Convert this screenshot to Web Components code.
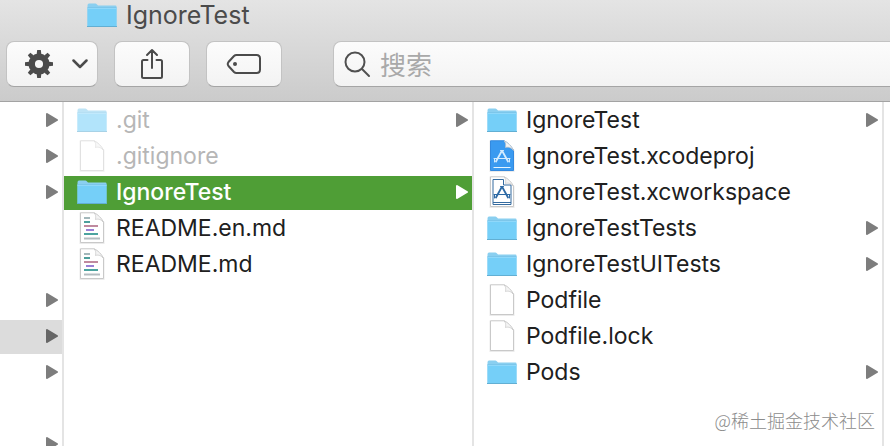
<!DOCTYPE html>
<html lang="zh-CN">
<head>
<meta charset="utf-8">
<title>IgnoreTest</title>
<style>
html, body { height: 100%; margin: 0; }
body { background: #fff; overflow: hidden; font: 400 23px/36px Inter, "Noto Sans CJK SC", sans-serif; font-optical-sizing: none; color: #202020; }
</style>
</head>
<body>
<finder-window>
  <finder-toolbar slot="toolbar">IgnoreTest</finder-toolbar>
  <finder-column aria-label="上级">
    <file-row arrow></file-row>
    <file-row arrow></file-row>
    <file-row arrow></file-row>
    <file-row></file-row>
    <file-row></file-row>
    <file-row arrow></file-row>
    <file-row arrow path></file-row>
    <file-row arrow></file-row>
    <file-row></file-row>
    <file-row arrow></file-row>
  </finder-column>
  <finder-column>
    <file-row kind="folder" arrow dim>.git</file-row>
    <file-row kind="blank" dim>.gitignore</file-row>
    <file-row kind="folder" arrow selected>IgnoreTest</file-row>
    <file-row kind="text">README.en.md</file-row>
    <file-row kind="text">README.md</file-row>
  </finder-column>
  <finder-column>
    <file-row kind="folder" arrow>IgnoreTest</file-row>
    <file-row kind="project">IgnoreTest.xcodeproj</file-row>
    <file-row kind="workspace">IgnoreTest.xcworkspace</file-row>
    <file-row kind="folder" arrow>IgnoreTestTests</file-row>
    <file-row kind="folder" arrow>IgnoreTestUITests</file-row>
    <file-row kind="blank">Podfile</file-row>
    <file-row kind="blank">Podfile.lock</file-row>
    <file-row kind="folder" arrow>Pods</file-row>
  </finder-column>
  <finder-column></finder-column>
  <span slot="mark">@稀土掘金技术社区</span>
</finder-window>
<script>
const sheet = (fill, stroke, inner) => `
  <svg viewBox="0 0 30 32" width="30" height="32" aria-hidden="true">
    <path d="M3.500 1.500H17L26.500 10.500V31H3.500Z" fill="none" stroke="#000" stroke-opacity=".08" stroke-width="2"/>
    <path d="M3.500 .800H17C20 2 25 7 26.500 10.500V30.500H3.500Z" fill="${fill}" stroke="${stroke}"/>
    ${inner}
    <path d="M17 1C19.500 3 18.500 6 18.500 7.500C20.500 6.500 25 7.500 26.500 10.500C25 6.500 20.500 2 17 1Z" fill="#f4f4f4" stroke="#c4c4c4" stroke-width=".7"/>
  </svg>`;
const compass = c => `
  <g fill="none" stroke="${c}" stroke-linecap="round">
    <path d="M14.500 11.500L9 21.500M15.500 11.500L21 21.500" stroke-width="1.800"/>
    <path d="M13.500 10.500H16.500M7 18.500H23M7.500 19V22M22.500 19V22" stroke-width="1"/>
  </g>`;
const icons = {
  folder: `
  <svg viewBox="0 0 30 26" width="30" height="26" aria-hidden="true">
    <path d="M.5 3.500Q.5 1.500 2 1.500H8.500Q9.500 1.500 10.500 3L11 3.500H28.500Q29.500 3.500 29.500 4.500V24.500H.5Z" fill="#8acff0"/>
    <path d="M.5 6H29.500V24.500H.5Z" fill="#75cff8"/>
    <path d="M.5 5.500H29.500" stroke="#7cc6ea"/>
    <path d="M.5 6.500H29.500" stroke="#8fd8fa"/>
    <path d="M0 24.500H30" stroke="#62afd3"/>
  </svg>`,
  blank: sheet('#fff', '#c9c9c9', ''),
  text: sheet('#fff', '#c9c9c9', `
    <g fill="none" stroke-width="2">
      <path d="M7 6H13" stroke="#a3b8bb"/><path d="M7 10H13" stroke="#4e9f9c"/>
      <path d="M7 14H21" stroke="#c08a9f"/><path d="M9 18H17" stroke="#9a80d6"/>
      <path d="M7 22H21" stroke="#4ca4a0"/><path d="M7 26.500H23" stroke="#b3bcc0"/>
    </g>`),
  project: sheet('#3a9af0', '#3389df', compass('#d4ecff') + '<path d="M6.500 27.500H23.500" stroke="#e6f5ff"/>'),
  workspace: sheet('#fff', '#c9c9c9', '<path d="M6 3.500H16.500V9H24V28.500H6Z" fill="#fff" stroke="#356b9f"/>' + compass('#2e6aa5') + '<path d="M6 26.500H24" stroke="#356b9f"/>')
};

class FinderWindow extends HTMLElement {
  constructor() {
    super();
    this.attachShadow({ mode: 'open' }).innerHTML = `
    <style>
      :host { display: flex; flex-direction: column; height: 100%; position: relative; overflow: hidden; }
      main { flex: 1; min-height: 0; display: grid; grid-template-columns: 64px 1fr 1fr 6px; }
      .mark { position: absolute; right: 15px; bottom: 15px; font: 18px/22px "Noto Sans CJK SC", sans-serif; font-weight: 300; color: #8c8c8c; text-shadow: 0 0 2px #fff; }
    </style>
    <slot name="toolbar"></slot>
    <main><slot></slot></main>
    <div class="mark"><slot name="mark"></slot></div>`;
  }
}

class FinderToolbar extends HTMLElement {
  constructor() {
    super();
    const teeth = [0, 45, 90, 135, 180, 225, 270, 315]
      .map(a => `<path d="M12.700 5L13.200 1H16.800L17.300 5Z" transform="rotate(${a} 15 15)"/>`).join('');
    this.attachShadow({ mode: 'open' }).innerHTML = `
    <style>
      :host { display: block; flex: none; background: linear-gradient(#e4e4e4, #cbcbcb); border-bottom: 1px solid #a3a3a3; }
      h1 { display: flex; align-items: center; gap: 9px; margin: 0; padding: 0 87px; height: 30px; font-size: 25px; line-height: 30px; font-weight: 400; color: #4b4b4b; }
      .bar { display: flex; padding: 11px 0 14px 6px; gap: 16px; overflow: hidden; }
      button, label { box-sizing: border-box; height: 46px; border: 1px solid #c3c3c3; border-bottom-color: #a5a5a5; border-radius: 8px; background: linear-gradient(#fcfcfc, #f3f3f3); color: #4b4b4b; }
      button { display: flex; align-items: center; justify-content: center; flex: none; width: 76px; padding: 0; }
      button.menu { width: 92px; gap: 18px; padding-left: 8px; }
      label { display: flex; align-items: center; flex: 1; min-width: 0; gap: 8px; padding: 0 10px; margin: 0 -12px 0 35px; }
      input { flex: 1; min-width: 0; border: 0; padding: 0; background: none; outline: 0; font: 26px/36px "Noto Sans CJK SC", sans-serif; color: inherit; appearance: none; }
      input::placeholder { color: #a9a9a9; opacity: 1; }
      svg { flex: none; display: block; }
    </style>
    <h1>${icons.folder}<slot></slot></h1>
    <div class="bar">
      <button class="menu" aria-label="操作">
        <svg viewBox="0 0 30 30" width="30" height="30" fill="currentColor">${teeth}<circle cx="15" cy="15" r="7.300" fill="none" stroke="currentColor" stroke-width="6.500"/></svg>
        <svg viewBox="0 0 16 10" width="16" height="10" fill="none" stroke="currentColor" stroke-width="2.500" stroke-linecap="round" stroke-linejoin="round"><path d="M1.500 1.500L8 8L14.500 1.500"/></svg>
      </button>
      <button aria-label="共享">
        <svg viewBox="0 0 24 32" width="24" height="32" fill="none" stroke="currentColor" stroke-width="2" stroke-linejoin="round" stroke-linecap="round"><path d="M7.500 12H3.500Q2 12 2 13.500V28.500Q2 30 3.500 30H20.500Q22 30 22 28.500V13.500Q22 12 20.500 12H16.500M12 20V2M7 7L12 2L17 7"/></svg>
      </button>
      <button aria-label="标签">
        <svg viewBox="0 0 36 22" width="36" height="22" fill="none" stroke="currentColor" stroke-width="2"><path d="M10.500 2H30.500Q34 2 34 5.500V16.500Q34 20 30.500 20H10.500Q9 20 8 19L2.500 13Q1 11 2.500 9L8 3Q9 2 10.500 2Z"/><circle cx="9" cy="11" r="2" fill="currentColor" stroke="none"/></svg>
      </button>
      <label>
        <svg viewBox="0 0 28 28" width="28" height="28" fill="none" stroke="#505050" stroke-width="2" stroke-linecap="round"><circle cx="11" cy="12" r="9.500"/><path d="M18 19L25 26"/></svg>
        <input type="search" placeholder="搜索" aria-label="搜索">
      </label>
    </div>`;
  }
}

class FinderColumn extends HTMLElement {
  constructor() {
    super();
    this.attachShadow({ mode: 'open' }).innerHTML = `
    <style>:host { display: block; min-width: 0; overflow: hidden; border-right: 2px solid #e4e4e4; }
    :host(:last-of-type) { border: 0; }</style><slot></slot>`;
  }
}

class FileRow extends HTMLElement {
  constructor() {
    super();
    this.attachShadow({ mode: 'open' });
  }
  connectedCallback() {
    const kind = this.getAttribute('kind');
    const arrow = this.hasAttribute('arrow')
      ? '<svg class="arrow" viewBox="0 0 12 14" width="12" height="14" aria-hidden="true"><path d="M1 1L11 7L1 13Z" fill="currentColor" stroke="currentColor" stroke-width="2" stroke-linejoin="round"/></svg>' : '';
    const body = `<span class="icon">${icons[kind] || ''}</span><span class="name"><slot></slot></span>${arrow}`;
    this.shadowRoot.innerHTML = `
    <style>
      :host { display: block; height: 36px; }
      button, .lead { box-sizing: border-box; display: flex; align-items: center; width: 100%; height: 36px; border: 0; margin: 0; padding: 0 4px 0 13px; background: none; font: inherit; font-optical-sizing: none; color: inherit; text-align: left; }
      .icon { flex: none; width: 30px; height: 32px; display: flex; align-items: center; }
      .name { flex: 1; min-width: 0; padding-left: 9px; white-space: nowrap; }
      .lead .icon, .lead .name { display: none; }
      .lead { justify-content: flex-end; }
      .arrow { flex: none; color: #7d7d7d; }
      :host([dim]) .icon { opacity: .55; }
      :host([dim]) .name { color: #b6b6b6; }
      :host([selected]) button { background: linear-gradient(#4f9e36, #4f9e36) 0 2px no-repeat; color: #fff; font-weight: 500; }
      :host([selected]) .arrow { color: #fff; }
      :host([path]) .lead { background: linear-gradient(#dcdcdc, #dcdcdc) 0 2px no-repeat; }
      :host([path]) .arrow { color: #666; }
    </style>
    ${kind ? `<button>${body}</button>` : `<div class="lead">${body}</div>`}`;
  }
}

customElements.define('finder-window', FinderWindow);
customElements.define('finder-toolbar', FinderToolbar);
customElements.define('finder-column', FinderColumn);
customElements.define('file-row', FileRow);
</script>
</body>
</html>
